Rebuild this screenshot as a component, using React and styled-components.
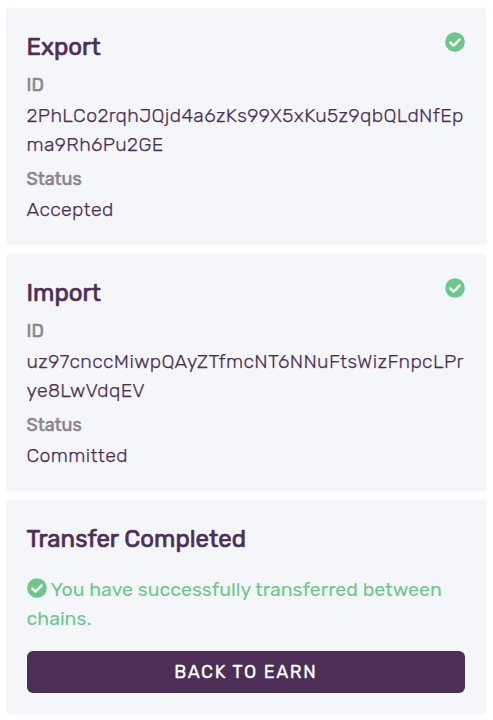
import React from "react";
import styled, { createGlobalStyle } from "styled-components";

const GlobalStyle = createGlobalStyle`
  * { box-sizing: border-box; }
  body {
    margin: 0;
    background: #fff;
    font-family: Rubik, Roboto, sans-serif;
  }
`;

const Page = styled.main`
  display: flex;
  flex-direction: column;
  gap: 9px;
  padding: 8px 7px 6px 6px;
`;

const Card = styled.section`
  height: ${(p) => p.$height}px;
  padding: 20px 21px 21px 20.5px;
  background: #f4f6fa;
  color: #4d2e56;
`;

const Header = styled.header`
  display: flex;
  justify-content: space-between;
  height: 38px;
`;

const Title = styled.h4`
  margin: 0;
  font-size: 24px;
  line-height: 38px;
  font-weight: 400;
  -webkit-text-stroke: 0.7px currentColor;
`;

const Icon = styled.svg`
  width: 20px;
  height: 20px;
  flex: none;
  margin-top: ${(p) => p.$top || 0}px;
`;

const Label = styled.div`
  margin-top: ${(p) => p.$top || 0}px;
  font-size: 18px;
  line-height: 22px;
  font-weight: 400;
  -webkit-text-stroke: 0.6px currentColor;
  color: #8b858e;
`;

const Value = styled.p`
  margin: 5px 0 0;
  font-size: 19.5px;
  line-height: 29px;
  font-weight: 300;
  letter-spacing: 0.36px;
  -webkit-text-stroke: 0.25px currentColor;
  overflow-wrap: anywhere;
`;

const Success = styled.p`
  margin: 17px 0 0;
  font-size: 19.5px;
  line-height: 29px;
  color: #6cc88a;
`;

const InlineCheck = styled.span`
  display: inline-block;
  height: 20px;
  margin-right: 4px;
  vertical-align: -2px;
  line-height: 0;
`;

const Button = styled.button`
  display: block;
  width: 100%;
  height: 42px;
  margin-top: 18px;
  padding: 0;
  border: 0;
  border-radius: 6px;
  background: #4d2e56;
  color: #fff;
  font: 400 18px/42px Rubik, Roboto, sans-serif;
  letter-spacing: 1.55px;
  -webkit-text-stroke: 0.3px currentColor;
`;

const Check = ({ top }) => (
  <Icon viewBox="0 0 20 20" $top={top} aria-hidden="true">
    <circle cx="10" cy="10" r="9.8" fill="#6cc88a" />
    <path
      d="M5.2 10.5 8.6 13.6 14.7 7.4"
      fill="none"
      stroke="#fff"
      strokeWidth="2.5"
      strokeLinecap="round"
      strokeLinejoin="round"
    />
  </Icon>
);

const transactions = [
  {
    title: "Export",
    id: "2PhLCo2rqhJQjd4a6zKs99X5xKu5z9qbQLdNfEpma9Rh6Pu2GE",
    status: "Accepted",
  },
  {
    title: "Import",
    id: "uz97cnccMiwpQAyZTfmcNT6NNuFtsWizFnpcLPrye8LwVdqEV",
    status: "Committed",
  },
];

export default function App() {
  return (
    <>
      <GlobalStyle />
      <Page>
        {transactions.map((t) => (
          <Card key={t.title} $height={237}>
            <Header>
              <Title>{t.title}</Title>
              <Check top={4} />
            </Header>
            <Label $top={8}>ID</Label>
            <Value>{t.id}</Value>
            <Label $top={9}>Status</Label>
            <Value>{t.status}</Value>
          </Card>
        ))}
        <Card $height={214}>
          <Header>
            <Title>Transfer Completed</Title>
          </Header>
          <Success>
            <InlineCheck><Check /></InlineCheck>
            You have successfully transferred between chains.
          </Success>
          <Button>BACK TO EARN</Button>
        </Card>
      </Page>
    </>
  );
}
